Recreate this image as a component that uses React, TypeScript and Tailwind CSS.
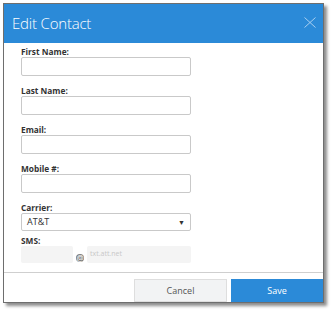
import React from "react";

function Field({ label }: { label: string }) {
  return (
    <div className="mb-[9px]">
      <div className="h-[11px] text-[8.3px] leading-[11px] font-bold text-[#333]">{label}</div>
      <div className="h-[19px] w-[170px] rounded-[2px] border border-[#c9c9c9] bg-white" />
    </div>
  );
}

export default function App() {
  return (
    <div className="h-[313px] w-[333px] bg-white pl-[3px] pt-[3px]" style={{ fontFamily: '"Open Sans", "Liberation Sans", sans-serif' }}>
      <div className="w-[321px] border border-[#6e6e6e] bg-white shadow-[3px_3px_3px_rgba(0,0,0,0.45)]">
        <div className="flex h-[39px] items-center justify-between bg-[#2b8ad8] pl-[8px] pr-[7px]">
          <div className="text-[15px] font-light leading-none tracking-[-0.2px] text-white">Edit Contact</div>
          <svg width="12" height="11" viewBox="0 0 12 11" className="mb-[3px]">
            <path d="M0.5 0.5 L11.5 10.5 M11.5 0.5 L0.5 10.5" stroke="#a9cff0" strokeWidth="1" fill="none" />
          </svg>
        </div>
        <div className="px-[17px] pt-[3px] pb-[9px]">
          <Field label="First Name:" />
          <Field label="Last Name:" />
          <Field label="Email:" />
          <Field label="Mobile #:" />
          <div className="h-[11px] text-[8.3px] leading-[11px] font-bold text-[#333]">Carrier:</div>
          <div className="flex h-[18px] w-[170px] items-center justify-between rounded-[2px] border border-[#c9c9c9] bg-white pl-[5px] pr-[5px]">
            <span className="text-[9px] text-[#333]">AT&amp;T</span>
            <span className="text-[7px] leading-none text-[#333]">▼</span>
          </div>
          <div className="mt-[4px] h-[11px] text-[8.3px] leading-[11px] font-bold text-[#333]">SMS:</div>
          <div className="flex items-start">
            <div className="h-[17px] w-[52px] rounded-[2px] bg-[#f4f4f4]" />
            <div className="mx-[3px] mt-[8px] flex h-[8px] w-[8px] items-center justify-center rounded-full bg-[#7d7d7d] text-[8px] font-bold leading-none text-[#dcdcdc]">@</div>
            <div className="flex h-[17px] w-[104px] items-center rounded-[2px] bg-[#f4f4f4] pl-[3px]">
              <span className="text-[7px] text-[#c8c8c8]">txt.att.net</span>
            </div>
          </div>
        </div>
        <div className="flex justify-end gap-[4px] border-t border-[#cfcfcf] pt-[6px]">
          <div className="flex h-[23px] w-[93px] items-center justify-center border border-[#dedede] bg-[#f2f3f4] text-[9px] text-[#555]">Cancel</div>
          <div className="flex h-[23px] w-[92px] items-center justify-center bg-[#2b8ad8] text-[9px] text-white">Save</div>
        </div>
      </div>
    </div>
  );
}
